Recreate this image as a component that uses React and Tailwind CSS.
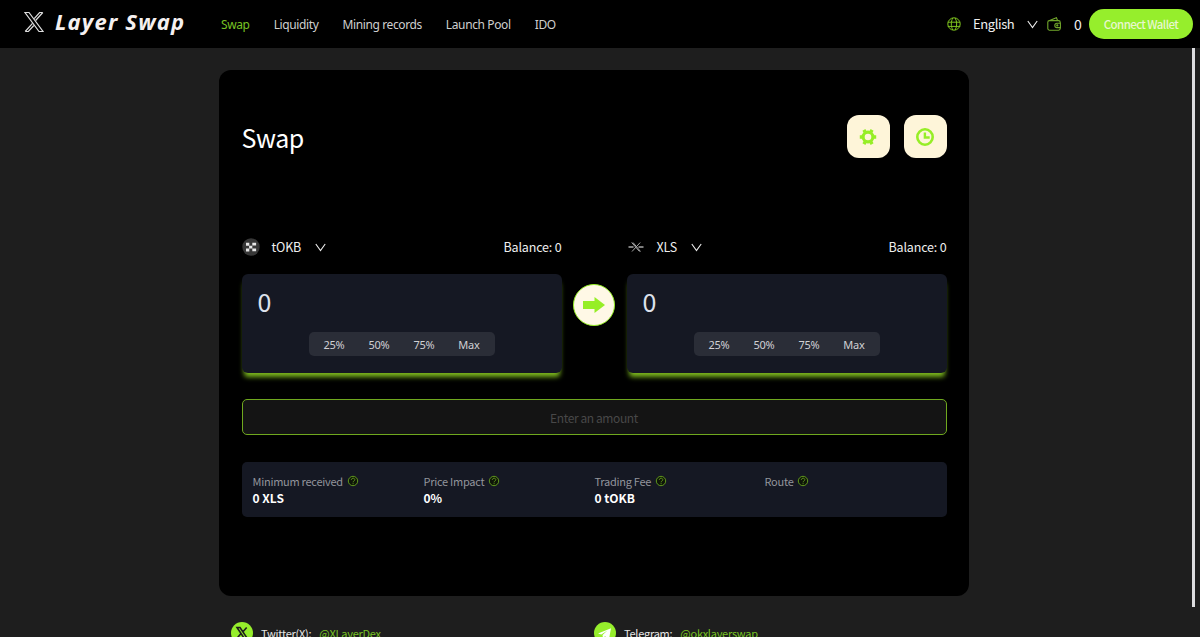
import { useState } from "react"
import clsx from "clsx"

const navItems = ["Swap", "Liquidity", "Mining records", "Launch Pool", "IDO"]
const percents = ["25%", "50%", "75%", "Max"]

const Chevron = ({ className }) => (
  <svg viewBox="0 0 11 9" className={clsx("h-[9px] w-[11px] shrink-0", className)} fill="none" stroke="currentColor" strokeWidth="1.1">
    <path d="M.8 1 5.5 7.6 10.2 1" />
  </svg>
)

const LogoMark = () => (
  <svg viewBox="0 0 20 22" className="h-[22px] w-5 shrink-0" fill="none" stroke="#dedede" strokeWidth="1.2">
    <path d="M1 1.5h4L19 20.5h-4z" />
    <path d="M18.8 1.5h-3.2L10.2 7.6M18.8 1.5 11.6 9.500M1.2 20.5h3.2l5.400-6M1.2 20.5l7.300-8.200" />
  </svg>
)

const GlobeIcon = () => (
  <svg viewBox="0 0 14 14" className="h-3.5 w-3.5 shrink-0" fill="none" stroke="#7fc41f" strokeWidth="1">
    <circle cx="7" cy="7" r="6.2" />
    <path d="M.8 5.2h12.4M.8 9.4h12.4M5.8 1C3.8 4.6 3.8 9.4 5.8 13M8.2 1c2 3.6 2 8.4 0 12" />
  </svg>
)

const WalletIcon = () => (
  <svg viewBox="0 0 14 14" className="block h-3.5 w-3.5 shrink-0" fill="none" stroke="#72a82b" strokeWidth="1.1">
    <path d="M13.2 6V5.2a1.6 1.6 0 0 0-1.6-1.6H2.4A1.6 1.6 0 0 0 .8 5.2v6.4a1.6 1.6 0 0 0 1.6 1.6h9.2a1.6 1.6 0 0 0 1.6-1.6v-.8" />
    <path d="M2.6 3.5 9.4.8l1.2 2.6M13.4 6.2H10a2.2 2.2 0 0 0 0 4.4h3.4z" />
    <circle cx="10.3" cy="8.4" r=".6" />
  </svg>
)

// six teeth around a ring
const GearIcon = () => (
  <svg viewBox="0 0 18 18" className="h-[18px] w-[18px]" fill="none" stroke="#96ee26">
    <circle cx="9" cy="9" r="4.9" strokeWidth="3.2" />
    <path d="M.8 9h2.4M14.8 9h2.4M4.9 1.9l1.2 2.1M11.9 14l1.2 2.1M13.1 1.9 11.9 4M6.1 14l-1.2 2.1" strokeWidth="3.4" />
  </svg>
)

const ClockIcon = () => (
  <svg viewBox="0 0 18 18" className="h-[18px] w-[18px]" fill="none" stroke="#96ee26" strokeWidth="2.6">
    <circle cx="9" cy="9" r="7.7" />
    <path d="M8.9 4.5v5h4.8" strokeWidth="2.4" />
  </svg>
)

const OkbIcon = () => (
  <svg viewBox="0 0 18 18" className="h-[18px] w-[18px] shrink-0">
    <circle cx="9" cy="9" r="8.7" fill="#373737" />
    <path fill="#e6e6e6" d="M4 4.8h3.3v3H4zM4 10.4h3.3v3H4zM7.1 7.7h3.2v2.8H7.1zM10.3 4.8h3.8v2.6h-3.8zM10.3 10.6h3.8v2.6h-3.8z" />
  </svg>
)

const XlsIcon = () => (
  <svg viewBox="0 0 16 12" className="ml-px h-3 w-4 shrink-0" fill="none" stroke="#a8a8a8">
    <path d="M.5 6h5M10.500 6h5" strokeWidth="1.4" />
    <path d="M3.700 1.500 11.500 10.500M5 1.500 12.500 10.500M12.200 1.500 4 10.500" strokeWidth="1" />
  </svg>
)

const HelpIcon = () => (
  <svg viewBox="0 0 12 12" className="h-3 w-3 shrink-0" fill="none" stroke="#5f971c" strokeWidth="1">
    <circle cx="6" cy="6" r="4.7" fill="#0e1508" />
    <path d="M4.3 4.9c0-2.3 3.500-2.2 3.500-.2C7.800 6 6.100 5.900 6.100 7.300M6.100 8.200v1" />
  </svg>
)

const TokenPanel = ({ icon, symbol }) => {
  const [amount, setAmount] = useState("0")

  return (
    <div className="w-[320px]">
      <div className="flex h-[22px] items-center text-[12.5px] tracking-[-0.17px] text-[#eeeeee]">
        <div className="flex w-[30px] items-center">{icon}</div>
        <span>{symbol}</span>
        <Chevron className="ml-3.5" />
        <span className="ml-auto">Balance: 0</span>
      </div>
      <div className="mt-4 flex h-[99px] flex-col items-center rounded-md bg-[#151823] shadow-[0_6px_5px_-2px_#7cb81e]">
        <input
          value={amount}
          onChange={(e) => setAmount(e.target.value)}
          className="mt-[10px] h-9 w-full bg-transparent px-4 text-[25px] text-[#dde2ec] outline-none"
        />
        <div className="mt-3 grid h-6 w-[186px] grid-cols-4 items-center rounded-[5px] bg-[#2a2d37] px-[3px] text-center font-['Noto_Sans'] text-[11px] tracking-[-0.2px] text-[#d0d0d4]">
          {percents.map((p) => (
            <button key={p} className="leading-none">{p}</button>
          ))}
        </div>
      </div>
    </div>
  )
}

const stats = [
  { label: "Minimum received", value: "0 XLS" },
  { label: "Price Impact", value: "0%" },
  { label: "Trading Fee", value: "0 tOKB" },
  { label: "Route", value: "" },
]

const Header = () => (
  <header className="flex h-12 shrink-0 items-center bg-black pl-6 pr-[7px]">
    <div className="flex w-[197px] items-center pb-[5px]">
      <LogoMark />
      <span className="ml-[11px] whitespace-nowrap pb-px font-['Noto_Sans'] text-[22px] font-bold italic leading-6 tracking-[1.2px] text-[#f5f0f0]">
        Layer Swap
      </span>
    </div>
    <nav className="flex gap-6 pt-[2px] font-['Noto_Sans'] text-[12px] tracking-[-0.38px] text-[#cfcfcf]">
      {navItems.map((item, i) => (
        <a key={item} href="#" className={clsx("whitespace-nowrap", i === 0 && "text-[#77c223]")}>{item}</a>
      ))}
    </nav>
    <div className="ml-auto flex items-center text-[13px] text-[#f0f0f0]">
      <GlobeIcon />
      <span className="ml-3 w-[42px] tracking-[-0.4px]">English</span>
      <Chevron className="ml-3" />
      <span className="ml-[9px]"><WalletIcon /></span>
      <span className="ml-[13px] w-2 text-sm">0</span>
      <button className="ml-[7px] h-[30px] w-[104px] whitespace-nowrap rounded-full bg-[#96ee2c] pt-px text-[11.5px] font-medium tracking-[-0.6px] text-[#e8f7cf]">
        Connect Wallet
      </button>
    </div>
  </header>
)

const App = () => {
  return (
    <div className="flex h-[637px] w-[1200px] flex-col overflow-hidden bg-[#1e1e1e] font-['Noto_Sans_CJK_SC',sans-serif]">
      <Header />
      <div className="flex flex-1 justify-between overflow-hidden">
        <main className="ml-[219px] mt-[22px] w-[750px]">
          <section className="h-[526px] rounded-xl bg-black px-[22.5px] pt-[45px]">
            <div className="flex h-[43px] items-center">
              <h1 className="flex-1 pt-0.5 text-[25px] leading-none tracking-[-0.5px] text-white">Swap</h1>
              <div className="flex gap-3.5">
                <button className="flex h-[43px] w-[43px] items-center justify-center rounded-xl bg-[#fef5d9]"><GearIcon /></button>
                <button className="flex h-[43px] w-[43px] items-center justify-center rounded-xl bg-[#fef5d9]"><ClockIcon /></button>
              </div>
            </div>

            <div className="mt-[78px] flex justify-between">
              <TokenPanel icon={<OkbIcon />} symbol="tOKB" />
              <button className="mt-12 flex h-[42px] w-[42px] items-center justify-center rounded-full border border-[#96ee26] bg-[#fff8e6]">
                <svg viewBox="0 0 22 16" className="h-4 w-[22px]" fill="#96ee26">
                  <path d="M0 4h11.5V0L22 8l-10.5 8v-4H0z" />
                </svg>
              </button>
              <TokenPanel icon={<XlsIcon />} symbol="XLS" />
            </div>

            <button className="mt-[26px] block h-9 w-full rounded-[5px] border border-[#6fa81e] bg-[#141414] pt-px text-[12px] tracking-[-0.4px] text-[#484848]">
              Enter an amount
            </button>

            <div className="mt-[27px] grid h-[55px] grid-cols-[171px_171px_170px_1fr] rounded-[5px] bg-[#151823] pl-[11px] pt-[11px]">
              {stats.map((s) => (
                <div key={s.label}>
                  <div className="flex h-4 items-center gap-1 text-[11px] tracking-[-0.26px] text-[#93959c]">
                    {s.label}
                    <HelpIcon />
                  </div>
                  <div className="mt-px h-4 text-[12px] font-bold leading-4 text-white">{s.value}</div>
                </div>
              ))}
            </div>
          </section>

          <footer className="mt-[26px] grid grid-cols-[363px_1fr] pl-3 text-[11px] tracking-[-0.25px] text-[#e6e6e6]">
            <div className="flex h-[22px] items-center">
              <svg viewBox="0 0 22 22" className="h-[22px] w-[22px]" fill="none">
                <circle cx="11" cy="11" r="11" fill="#96ee2c" />
                <path d="M6 5.5h3l7 10.5h-3zM15.7 5.5l-4 4.6M10 11.6 6.2 16" stroke="#1e1e1e" strokeWidth="1.6" />
              </svg>
              <span className="ml-2">Twitter(X):</span>
              <a href="#" className="ml-2 text-[#77c223]">@XLayerDex</a>
            </div>
            <div className="flex h-[22px] items-center">
              <svg viewBox="0 0 22 22" className="h-[22px] w-[22px]">
                <circle cx="11" cy="11" r="11" fill="#96ee2c" />
                <path d="m4 11.5 13-5.3-2 11-4-3-2 2-.5-3.3 5-4.5-6.2 4z" fill="#fff" />
              </svg>
              <span className="ml-2">Telegram:</span>
              <a href="#" className="ml-2 text-[#77c223]">@okxlayerswap</a>
            </div>
          </footer>
        </main>
        <div className="mr-[5px] h-[559px] w-[3px] bg-[#dcdcdf]" />
      </div>
    </div>
  )
}

export default App
